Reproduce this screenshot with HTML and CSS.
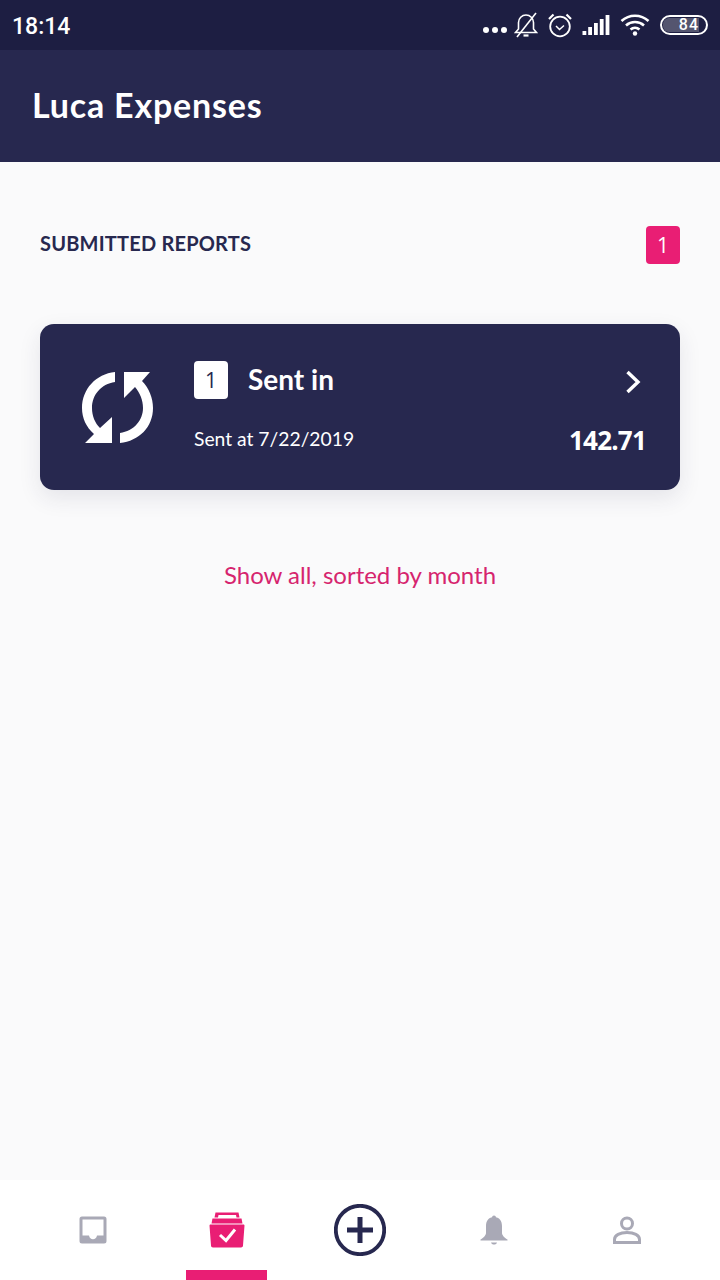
FILE: index.html
```html
<!DOCTYPE html>
<html>
<head>
    <title>Luca Expenses</title>
    <link rel="stylesheet" href="styles.css">
</head>
<body>
    <div class="phone">
        <div class="status-bar">
            <span class="clock">18:14</span>
            <div class="status-icons">
                <span class="dots"><i></i><i></i><i></i></span>
                <svg class="ic-mute" width="24" height="26" viewBox="0 0 24 26" fill="none" stroke="#fff" stroke-width="1.6">
                    <path d="M1.500 20.500h21l-3-3.500V10.500a7.500 7.500 0 0 0-7.500-7.500 7.500 7.500 0 0 0-7.500 7.500V17z"/>
                    <path d="M9.500 23.500h5" stroke-width="2.200"/>
                    <path d="M3 25 22 1"/>
                </svg>
                <svg class="ic-alarm" width="24" height="26" viewBox="0 0 24 26" fill="none" stroke="#fff" stroke-width="1.800">
                    <circle cx="12" cy="14.500" r="9.800"/>
                    <path d="M8 14l3.500 3.500 4.500-4" stroke-width="1.500"/>
                    <path d="M1 7 5.500 2.500M23 7l-4.500-4.500" stroke-width="2.200"/>
                </svg>
                <svg class="ic-signal" width="28" height="22" viewBox="0 0 28 22" fill="#fff">
                    <rect x="0.500" y="17" width="3.800" height="4"/>
                    <rect x="6.200" y="13" width="3.800" height="8"/>
                    <rect x="12" y="9" width="3.800" height="12"/>
                    <rect x="17.800" y="5" width="3.800" height="16"/>
                    <rect x="23.600" y="1" width="3.800" height="20"/>
                </svg>
                <svg class="ic-wifi" width="30" height="24" viewBox="0 0 30 24" fill="none" stroke="#fff" stroke-width="2.600">
                    <path d="M1.500 8a20 20 0 0 1 27 0"/>
                    <path d="M6 12.500a13.500 13.500 0 0 1 18 0"/>
                    <path d="M10.500 16.500a7 7 0 0 1 9 0"/>
                    <circle cx="15" cy="20.500" r="2.200" fill="#fff" stroke="none"/>
                </svg>
                <span class="battery"><span class="battery-level">84</span></span>
            </div>
        </div>

        <header class="app-bar">
            <h1>Luca Expenses</h1>
        </header>

        <main class="content">
            <div class="section-head">
                <h2>SUBMITTED REPORTS</h2>
                <span class="count">1</span>
            </div>

            <div class="report-card">
                <svg class="ic-sync" width="72" height="72" viewBox="0 0 72 72" fill="#fff">
                    <path d="M33 0V10C19 12 10 23 10 36C10 44 13 51 18 56L30 45V71H3L12 62C4 55 0 46 0 36C0 17 14 2 33 0Z"/>
                    <path d="M38 71V61C52 59 61 48 61 36C61 28 58 21 53 15L42 26V0H68L60 9C67 16 71 26 71 36C71 55 57 69 38 71Z"/>
                </svg>
                <div class="report-body">
                    <div class="report-top">
                        <span class="report-num">1</span>
                        <span class="report-title">Sent in</span>
                        <svg class="ic-chevron" width="16" height="24" viewBox="0 0 16 24" fill="none" stroke="#fff" stroke-width="3.400">
                            <path d="M2.500 2 13 12 2.500 22"/>
                        </svg>
                    </div>
                    <div class="report-bottom">
                        <span class="report-date">Sent at 7/22/2019</span>
                        <span class="report-amount">142.71</span>
                    </div>
                </div>
            </div>

            <a class="show-all">Show all, sorted by month</a>
        </main>

        <nav class="tab-bar">
            <div class="tab">
                <svg width="28" height="28" viewBox="0 0 28 28">
                    <path fill="#a9a9b6" fill-rule="evenodd" d="M3 0.500h22a2.500 2.500 0 0 1 2.500 2.500v22a2.500 2.500 0 0 1-2.500 2.500H3A2.500 2.500 0 0 1 0.500 25V3A2.500 2.500 0 0 1 3 0.500zM3.500 3.500v16h6.500c.5 2.500 2 3.800 4 3.800s3.500-1.300 4-3.800h6.500v-16z"/>
                </svg>
            </div>
            <div class="tab tab-active">
                <svg width="36" height="36" viewBox="0 0 36 36" fill="#e91e74">
                    <path d="M6.500 0.500h23l1 5h-3l-.5-2.500H9.500L9 5.500H5.500z"/>
                    <path d="M3.500 6.500h29l1 5h-31z"/>
                    <path d="M0.500 13.500c0-.5.500-1 1-1h33c.5 0 1 .5 1 1l-1.500 20c0 1-.8 2-2 2h-28c-1.200 0-2-1-2-2z"/>
                    <path d="M11 23l6 5.500 9-11" fill="none" stroke="#fff" stroke-width="3"/>
                </svg>
                <span class="tab-marker"></span>
            </div>
            <div class="tab">
                <svg width="52" height="52" viewBox="0 0 52 52" fill="none" stroke="#27284f">
                    <circle cx="26" cy="26" r="24.200" stroke-width="3.800"/>
                    <path d="M13 26h26M26 13v26" stroke-width="5"/>
                </svg>
            </div>
            <div class="tab">
                <svg width="28" height="30" viewBox="0 0 28 30" fill="#a9a9b6">
                    <circle cx="14" cy="2.500" r="2"/>
                    <path d="M14 2c5.500 0 8 4 8 9v7c0 2.500 3 5 5.500 6.500v1H.500v-1C3 23 6 20.500 6 18v-7c0-5 2.500-9 8-9z"/>
                    <path d="M11 27.500h6c-.5 1.500-1.500 2-3 2s-2.500-.5-3-2z"/>
                </svg>
            </div>
            <div class="tab">
                <svg width="28" height="28" viewBox="0 0 28 28" fill="none" stroke="#a9a9b6" stroke-width="3">
                    <circle cx="14" cy="7.500" r="5.500"/>
                    <path d="M1.500 26.500v-3C1.500 19 7 16.500 14 16.500s12.500 2.500 12.500 7v3z"/>
                </svg>
            </div>
        </nav>
    </div>
</body>
</html>
```

FILE: styles.css
```css
* {
    box-sizing: border-box;
}

html, body {
    margin: 0;
    padding: 0;
}

body {
    font-family: 'Lato', sans-serif;
    background: #fafafb;
}

.phone {
    width: 720px;
    height: 1280px;
    display: flex;
    flex-direction: column;
    overflow: hidden;
    background: #fafafb;
}

.status-bar {
    height: 50px;
    background: #1d1e42;
    color: #fff;
    display: flex;
    align-items: center;
    justify-content: space-between;
    padding: 0 12px 0 12px;
}

.clock {
    font-family: 'Roboto', sans-serif;
    font-size: 23px;
    font-weight: 500;
    margin-top: 2px;
}

.status-icons {
    display: flex;
    align-items: center;
    gap: 10px;
}

.dots {
    display: flex;
    gap: 3px;
    margin-top: 9px;
    margin-right: -3px;
}

.dots i {
    width: 6px;
    height: 6px;
    border-radius: 50%;
    background: #fff;
}

.battery {
    width: 48px;
    height: 20px;
    border: 2px solid #fff;
    border-radius: 10px;
    padding: 1px;
    display: flex;
}

.battery-level {
    width: 36px;
    background: #54556f;
    border-radius: 6px 0 0 6px;
    color: #fff;
    font-family: 'Roboto', sans-serif;
    font-size: 16px;
    font-weight: 500;
    line-height: 14px;
    text-align: right;
    letter-spacing: 1px;
}

.app-bar {
    height: 112px;
    background: #27284f;
    display: flex;
    align-items: center;
    padding: 0 32px 4px;
}

.app-bar h1 {
    margin: 0;
    color: #fff;
    font-size: 34px;
    font-weight: 700;
    letter-spacing: 0.8px;
}

.content {
    flex: 1;
    padding: 64px 40px 0;
    display: flex;
    flex-direction: column;
}

.section-head {
    display: flex;
    align-items: center;
    justify-content: space-between;
}

.section-head h2 {
    margin: -4px 0 0;
    color: #27284f;
    font-size: 20px;
    font-weight: 700;
    letter-spacing: 0.2px;
}

.count {
    width: 34px;
    height: 38px;
    background: #e91e74;
    border-radius: 4px;
    color: #fff;
    font-family: 'Open Sans', sans-serif;
    font-size: 21px;
    display: flex;
    align-items: center;
    justify-content: center;
}

.report-card {
    margin-top: 60px;
    height: 166px;
    background: #27284f;
    border-radius: 14px;
    box-shadow: 0 8px 22px rgba(39, 40, 79, 0.1);
    display: flex;
    align-items: center;
    padding: 0 34px 0 42px;
    color: #fff;
}

.ic-sync {
    flex: none;
    margin-top: 2px;
}

.report-body {
    flex: 1;
    margin-left: 40px;
    display: flex;
    flex-direction: column;
    gap: 20px;
    margin-top: 5px;
}

.report-top {
    display: flex;
    align-items: center;
}

.report-num {
    width: 34px;
    height: 38px;
    background: #fff;
    border-radius: 4px;
    color: #27284f;
    font-family: 'Open Sans', sans-serif;
    font-size: 21px;
    display: flex;
    align-items: center;
    justify-content: center;
}

.report-title {
    margin: -2px 0 0 20px;
    font-size: 28px;
    font-weight: 700;
}

.ic-chevron {
    margin-left: auto;
    margin-right: 5px;
    margin-top: 4px;
}

.report-bottom {
    display: flex;
    align-items: center;
    justify-content: space-between;
}

.report-date {
    font-size: 19.300px;
}

.report-amount {
    font-family: 'Open Sans', sans-serif;
    font-size: 26px;
    font-weight: 700;
    letter-spacing: -0.8px;
    margin-top: 3px;
}

.show-all {
    margin-top: 70px;
    text-align: center;
    color: #d6246e;
    font-size: 24px;
}

.tab-bar {
    height: 100px;
    background: #fff;
    display: grid;
    grid-template-columns: 186px 81px 1fr 81px 186px;
}

.tab {
    position: relative;
    display: flex;
    justify-content: center;
    align-items: center;
    height: 100px;
}

.tab-marker {
    position: absolute;
    left: 0;
    right: 0;
    bottom: 0;
    height: 10px;
    background: #e91e74;
}
```
